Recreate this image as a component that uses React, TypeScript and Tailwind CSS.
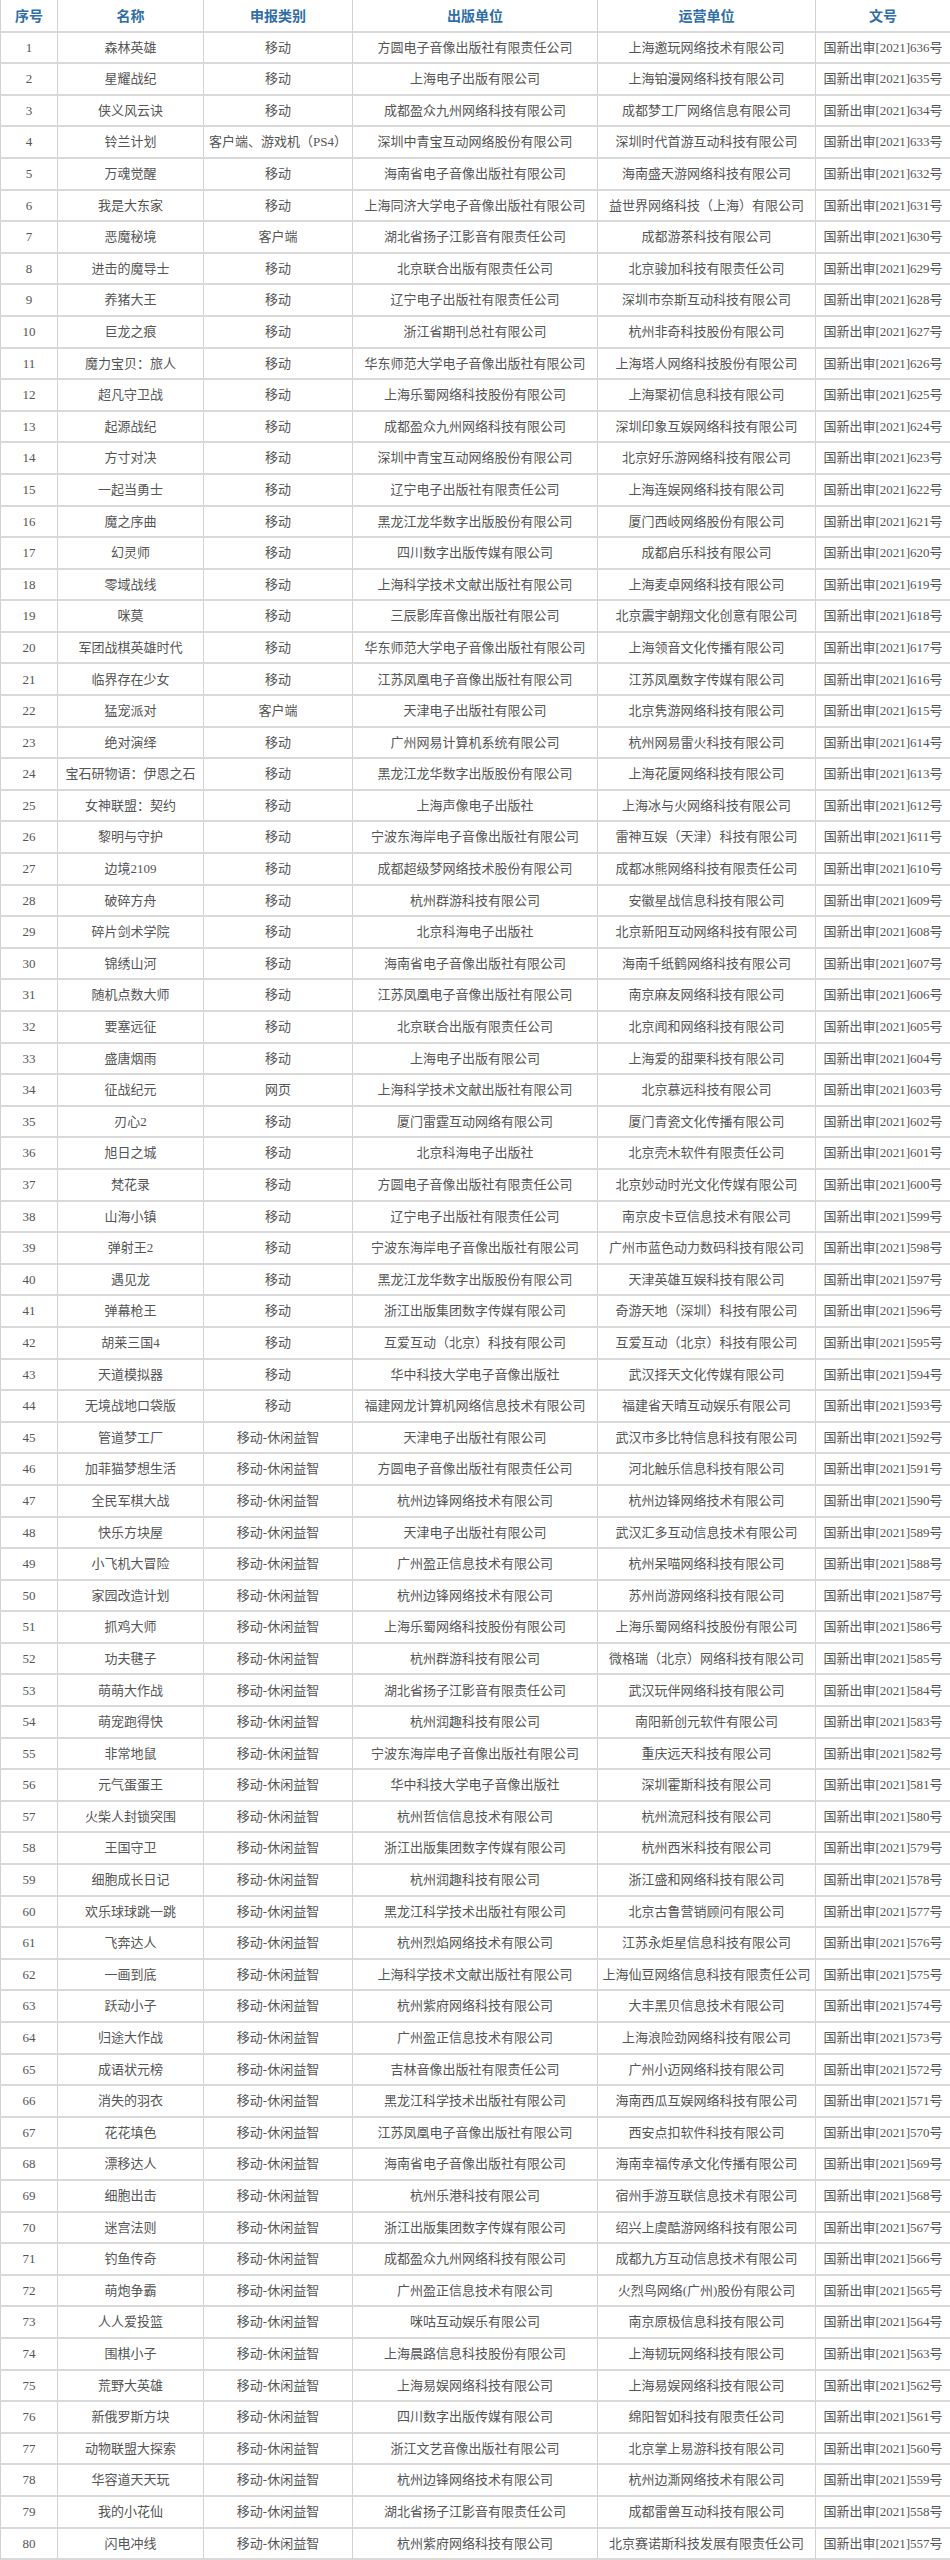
import React from 'react';

// 游戏版号审批列表（2021）
type Row = [string, string, string, string];

const rows: Row[] = [
  ['森林英雄', '移动', '方圆电子音像出版社有限责任公司', '上海邀玩网络技术有限公司'],
  ['星耀战纪', '移动', '上海电子出版有限公司', '上海铂漫网络科技有限公司'],
  ['侠义风云诀', '移动', '成都盈众九州网络科技有限公司', '成都梦工厂网络信息有限公司'],
  ['铃兰计划', '客户端、游戏机（PS4）', '深圳中青宝互动网络股份有限公司', '深圳时代首游互动科技有限公司'],
  ['万魂觉醒', '移动', '海南省电子音像出版社有限公司', '海南盛天游网络科技有限公司'],
  ['我是大东家', '移动', '上海同济大学电子音像出版社有限公司', '益世界网络科技（上海）有限公司'],
  ['恶魔秘境', '客户端', '湖北省扬子江影音有限责任公司', '成都游茶科技有限公司'],
  ['进击的魔导士', '移动', '北京联合出版有限责任公司', '北京骏加科技有限责任公司'],
  ['养猪大王', '移动', '辽宁电子出版社有限责任公司', '深圳市奈斯互动科技有限公司'],
  ['巨龙之痕', '移动', '浙江省期刊总社有限公司', '杭州非奇科技股份有限公司'],
  ['魔力宝贝：旅人', '移动', '华东师范大学电子音像出版社有限公司', '上海塔人网络科技股份有限公司'],
  ['超凡守卫战', '移动', '上海乐蜀网络科技股份有限公司', '上海聚初信息科技有限公司'],
  ['起源战纪', '移动', '成都盈众九州网络科技有限公司', '深圳印象互娱网络科技有限公司'],
  ['方寸对决', '移动', '深圳中青宝互动网络股份有限公司', '北京好乐游网络科技有限公司'],
  ['一起当勇士', '移动', '辽宁电子出版社有限责任公司', '上海连娱网络科技有限公司'],
  ['魔之序曲', '移动', '黑龙江龙华数字出版股份有限公司', '厦门西岐网络股份有限公司'],
  ['幻灵师', '移动', '四川数字出版传媒有限公司', '成都启乐科技有限公司'],
  ['零域战线', '移动', '上海科学技术文献出版社有限公司', '上海麦卓网络科技有限公司'],
  ['咪莫', '移动', '三辰影库音像出版社有限公司', '北京震宇朝翔文化创意有限公司'],
  ['军团战棋英雄时代', '移动', '华东师范大学电子音像出版社有限公司', '上海领音文化传播有限公司'],
  ['临界存在少女', '移动', '江苏凤凰电子音像出版社有限公司', '江苏凤凰数字传媒有限公司'],
  ['猛宠派对', '客户端', '天津电子出版社有限公司', '北京隽游网络科技有限公司'],
  ['绝对演绎', '移动', '广州网易计算机系统有限公司', '杭州网易雷火科技有限公司'],
  ['宝石研物语：伊恩之石', '移动', '黑龙江龙华数字出版股份有限公司', '上海花厦网络科技有限公司'],
  ['女神联盟：契约', '移动', '上海声像电子出版社', '上海冰与火网络科技有限公司'],
  ['黎明与守护', '移动', '宁波东海岸电子音像出版社有限公司', '雷神互娱（天津）科技有限公司'],
  ['边境2109', '移动', '成都超级梦网络技术股份有限公司', '成都冰熊网络科技有限责任公司'],
  ['破碎方舟', '移动', '杭州群游科技有限公司', '安徽星战信息科技有限公司'],
  ['碎片剑术学院', '移动', '北京科海电子出版社', '北京新阳互动网络科技有限公司'],
  ['锦绣山河', '移动', '海南省电子音像出版社有限公司', '海南千纸鹤网络科技有限公司'],
  ['随机点数大师', '移动', '江苏凤凰电子音像出版社有限公司', '南京麻友网络科技有限公司'],
  ['要塞远征', '移动', '北京联合出版有限责任公司', '北京闻和网络科技有限公司'],
  ['盛唐烟雨', '移动', '上海电子出版有限公司', '上海爱的甜栗科技有限公司'],
  ['征战纪元', '网页', '上海科学技术文献出版社有限公司', '北京慕远科技有限公司'],
  ['刃心2', '移动', '厦门雷霆互动网络有限公司', '厦门青瓷文化传播有限公司'],
  ['旭日之城', '移动', '北京科海电子出版社', '北京壳木软件有限责任公司'],
  ['梵花录', '移动', '方圆电子音像出版社有限责任公司', '北京妙动时光文化传媒有限公司'],
  ['山海小镇', '移动', '辽宁电子出版社有限责任公司', '南京皮卡豆信息技术有限公司'],
  ['弹射王2', '移动', '宁波东海岸电子音像出版社有限公司', '广州市蓝色动力数码科技有限公司'],
  ['遇见龙', '移动', '黑龙江龙华数字出版股份有限公司', '天津英雄互娱科技有限公司'],
  ['弹幕枪王', '移动', '浙江出版集团数字传媒有限公司', '奇游天地（深圳）科技有限公司'],
  ['胡莱三国4', '移动', '互爱互动（北京）科技有限公司', '互爱互动（北京）科技有限公司'],
  ['天道模拟器', '移动', '华中科技大学电子音像出版社', '武汉择天文化传媒有限公司'],
  ['无境战地口袋版', '移动', '福建网龙计算机网络信息技术有限公司', '福建省天晴互动娱乐有限公司'],
  ['管道梦工厂', '移动-休闲益智', '天津电子出版社有限公司', '武汉市多比特信息科技有限公司'],
  ['加菲猫梦想生活', '移动-休闲益智', '方圆电子音像出版社有限责任公司', '河北触乐信息科技有限公司'],
  ['全民军棋大战', '移动-休闲益智', '杭州边锋网络技术有限公司', '杭州边锋网络技术有限公司'],
  ['快乐方块屋', '移动-休闲益智', '天津电子出版社有限公司', '武汉汇多互动信息技术有限公司'],
  ['小飞机大冒险', '移动-休闲益智', '广州盈正信息技术有限公司', '杭州呆喵网络科技有限公司'],
  ['家园改造计划', '移动-休闲益智', '杭州边锋网络技术有限公司', '苏州尚游网络科技有限公司'],
  ['抓鸡大师', '移动-休闲益智', '上海乐蜀网络科技股份有限公司', '上海乐蜀网络科技股份有限公司'],
  ['功夫毽子', '移动-休闲益智', '杭州群游科技有限公司', '微格瑞（北京）网络科技有限公司'],
  ['萌萌大作战', '移动-休闲益智', '湖北省扬子江影音有限责任公司', '武汉玩伴网络科技有限公司'],
  ['萌宠跑得快', '移动-休闲益智', '杭州润趣科技有限公司', '南阳新创元软件有限公司'],
  ['非常地鼠', '移动-休闲益智', '宁波东海岸电子音像出版社有限公司', '重庆远天科技有限公司'],
  ['元气蛋蛋王', '移动-休闲益智', '华中科技大学电子音像出版社', '深圳霍斯科技有限公司'],
  ['火柴人封锁突围', '移动-休闲益智', '杭州哲信信息技术有限公司', '杭州流冠科技有限公司'],
  ['王国守卫', '移动-休闲益智', '浙江出版集团数字传媒有限公司', '杭州西米科技有限公司'],
  ['细胞成长日记', '移动-休闲益智', '杭州润趣科技有限公司', '浙江盛和网络科技有限公司'],
  ['欢乐球球跳一跳', '移动-休闲益智', '黑龙江科学技术出版社有限公司', '北京古鲁营销顾问有限公司'],
  ['飞奔达人', '移动-休闲益智', '杭州烈焰网络技术有限公司', '江苏永炬星信息科技有限公司'],
  ['一画到底', '移动-休闲益智', '上海科学技术文献出版社有限公司', '上海仙豆网络信息科技有限责任公司'],
  ['跃动小子', '移动-休闲益智', '杭州紫府网络科技有限公司', '大丰黑贝信息技术有限公司'],
  ['归途大作战', '移动-休闲益智', '广州盈正信息技术有限公司', '上海浪险劲网络科技有限公司'],
  ['成语状元榜', '移动-休闲益智', '吉林音像出版社有限责任公司', '广州小迈网络科技有限公司'],
  ['消失的羽衣', '移动-休闲益智', '黑龙江科学技术出版社有限公司', '海南西瓜互娱网络科技有限公司'],
  ['花花填色', '移动-休闲益智', '江苏凤凰电子音像出版社有限公司', '西安点扣软件科技有限公司'],
  ['漂移达人', '移动-休闲益智', '海南省电子音像出版社有限公司', '海南幸福传承文化传播有限公司'],
  ['细胞出击', '移动-休闲益智', '杭州乐港科技有限公司', '宿州手游互联信息技术有限公司'],
  ['迷宫法则', '移动-休闲益智', '浙江出版集团数字传媒有限公司', '绍兴上虞酷游网络科技有限公司'],
  ['钓鱼传奇', '移动-休闲益智', '成都盈众九州网络科技有限公司', '成都九方互动信息技术有限公司'],
  ['萌炮争霸', '移动-休闲益智', '广州盈正信息技术有限公司', '火烈鸟网络(广州)股份有限公司'],
  ['人人爱投篮', '移动-休闲益智', '咪咕互动娱乐有限公司', '南京原极信息科技有限公司'],
  ['围棋小子', '移动-休闲益智', '上海晨路信息科技股份有限公司', '上海韧玩网络科技有限公司'],
  ['荒野大英雄', '移动-休闲益智', '上海易娱网络科技有限公司', '上海易娱网络科技有限公司'],
  ['新俄罗斯方块', '移动-休闲益智', '四川数字出版传媒有限公司', '绵阳智如科技有限责任公司'],
  ['动物联盟大探索', '移动-休闲益智', '浙江文艺音像出版社有限公司', '北京掌上易游科技有限公司'],
  ['华容道天天玩', '移动-休闲益智', '杭州边锋网络技术有限公司', '杭州边澌网络技术有限公司'],
  ['我的小花仙', '移动-休闲益智', '湖北省扬子江影音有限责任公司', '成都雷兽互动科技有限公司'],
  ['闪电冲线', '移动-休闲益智', '杭州紫府网络科技有限公司', '北京赛诺斯科技发展有限责任公司'],
];

const headers = ['序号', '名称', '申报类别', '出版单位', '运营单位', '文号'];
const cell = 'border-x border-b-2 border-x-[#d2d2d2] border-b-[#d9d9d9] text-center align-middle whitespace-nowrap p-0';

export default function App() {
  return (
    <div className="w-[950px] bg-white font-['Liberation_Serif','Noto_Sans_CJK_SC',serif] text-[13px] text-[#555]">
      <table className="w-[950px] table-fixed border-collapse">
        <colgroup>
          <col className="w-[57px]" />
          <col className="w-[146px]" />
          <col className="w-[149px]" />
          <col className="w-[245px]" />
          <col className="w-[218px]" />
          <col className="w-[135px]" />
        </colgroup>
        <thead>
          <tr className="h-[31.6px]">
            {headers.map((h) => (
              <th
                key={h}
                className={`${cell} font-['Noto_Sans_CJK_SC',sans-serif] text-[14px] font-bold text-[#2f6ea6]`}
              >
                {h}
              </th>
            ))}
          </tr>
        </thead>
        <tbody>
          {rows.map((r, i) => (
            <tr key={i} className="h-[31.6px]">
              <td className={cell}>{i + 1}</td>
              <td className={cell}>{r[0]}</td>
              <td className={cell}>{r[1]}</td>
              <td className={cell}>{r[2]}</td>
              <td className={cell}>{r[3]}</td>
              <td className={cell}>国新出审[2021]{636 - i}号</td>
            </tr>
          ))}
        </tbody>
      </table>
    </div>
  );
}
